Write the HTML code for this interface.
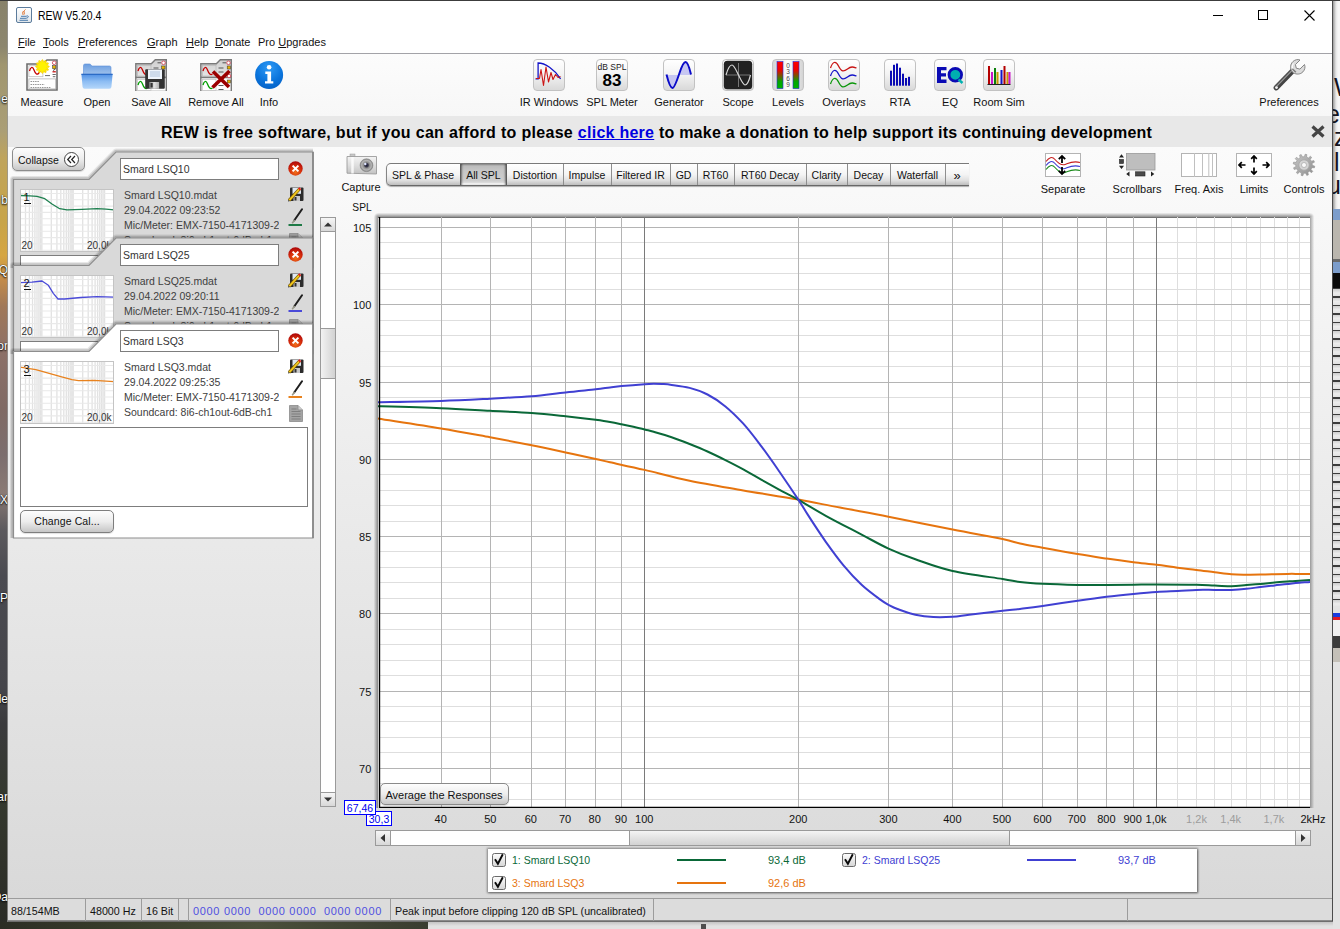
<!DOCTYPE html>
<html><head><meta charset="utf-8"><title>REW V5.20.4</title>
<style>
html,body{margin:0;padding:0}
body{width:1340px;height:929px;overflow:hidden;position:relative;background:#e9e9e9;font-family:"Liberation Sans",sans-serif;font-size:11px;color:#121212}
div,span,svg{position:absolute;box-sizing:border-box}
.t{white-space:pre;line-height:13px;height:13px}
.s{font-size:10.5px}
.lb{width:90px;text-align:center;top:96px}
.ico{width:32px;height:32px;top:59px;border:1px solid #c2c2c2;border-radius:4px;background:linear-gradient(#ffffff 0%,#f4f4f4 45%,#d9d9d9 100%);overflow:hidden}
.ico svg{left:-1px;top:-1px}

</style></head>
<body>
<!-- desktop -->
<div style="left:0;top:0;width:1340px;height:929px;background:#e9e9e9"></div>
<!-- desktop strip left -->
<div style="left:0;top:0;width:8px;height:929px;background:linear-gradient(#88826a 0%,#8c866e 5%,#a0966f 7%,#aa9e76 14%,#bfa45c 17%,#c8a448 24%,#d6a642 27.500%,#c48c4a 30%,#a07858 33%,#8c7068 38%,#806a64 44%,#7c6e6e 49%,#8a7a74 53%,#5c5a5e 57%,#4a4a50 62%,#45454a 74%,#3a3a3c 78%,#34382e 86%,#30322a 93%,#2a2c26 100%)"></div>
<div style="left:0;top:0;width:8px;height:929px;overflow:hidden;color:#fff;text-shadow:0 1px 2px #000,0 0 1px #000"><span class="t" style="right:0;top:92px;font-size:12px;line-height:14px;height:14px">e</span><span class="t" style="right:0;top:193px;font-size:12px;line-height:14px;height:14px">b</span><span class="t" style="right:0;top:263px;font-size:12px;line-height:14px;height:14px">Q</span><span class="t" style="right:0;top:339px;font-size:12px;line-height:14px;height:14px">or</span><span class="t" style="right:0;top:493px;font-size:12px;line-height:14px;height:14px">-X</span><span class="t" style="right:0;top:591px;font-size:12px;line-height:14px;height:14px">P</span><span class="t" style="right:0;top:692px;font-size:12px;line-height:14px;height:14px">ile</span><span class="t" style="right:0;top:790px;font-size:12px;line-height:14px;height:14px">ar</span><span class="t" style="right:0;top:890px;font-size:12px;line-height:14px;height:14px">Da</span></div>
<div style="left:7px;top:1px;width:1px;height:921px;background:rgba(150,150,150,.75)"></div>
<!-- desktop strip bottom -->
<div style="left:0;top:922px;width:428px;height:7px;background:linear-gradient(90deg,#2b2d24,#3a3f2c 30%,#4a4f3a 60%,#3a3d30)"></div>
<div style="left:428px;top:922px;width:912px;height:7px;background:linear-gradient(#c4c4c4,#e2e2e2 4px)"></div>
<div style="left:701px;top:924px;width:5px;height:5px;background:#4e4e4e"></div>
<!-- desktop strip right -->
<div style="left:1333px;top:0;width:7px;height:929px;background:#e3e3e3"></div>
<div style="left:1333px;top:1px;width:7px;height:208px;background:linear-gradient(90deg,#9a9a9a,#e6e6e6 3px,#f6f6f6 5px)"></div>
<div style="left:1333px;top:62px;width:7px;height:135px;overflow:hidden;font-size:25px;line-height:27px;color:#15151f"><span class="t" style="left:1px;top:12px;font-size:25px;line-height:27px;height:27px">W</span><span class="t" style="left:-7px;top:39px;font-size:25px;line-height:27px;height:27px">e</span><span class="t" style="left:1px;top:62px;font-size:25px;line-height:27px;height:27px">z</span><span class="t" style="left:1px;top:87px;font-size:25px;line-height:27px;height:27px">lo</span><span class="t" style="left:-6px;top:110px;font-size:25px;line-height:27px;height:27px">u</span></div>
<div style="left:1333px;top:209px;width:7px;height:11px;background:#7c9dcb"></div>
<div style="left:1333px;top:220px;width:7px;height:39px;background:#bab6ae"></div>
<div style="left:1333px;top:259px;width:7px;height:3px;background:#6a6a6a"></div>
<div style="left:1333px;top:262px;width:7px;height:11px;background:#7c9dcb"></div>
<div style="left:1333px;top:273px;width:7px;height:15px;background:#0a0a0a"></div>
<div style="left:1333px;top:288px;width:7px;height:318px;background:repeating-linear-gradient(#3c3c3c 0,#3c3c3c 1.400px,#cfcfcf 1.400px,#ececec 5px,#e2e2e2 8.400px)"></div>
<div style="left:1333px;top:613px;width:7px;height:4px;background:#1a3ce0"></div>
<div style="left:1333px;top:617px;width:7px;height:3px;background:#e01a28"></div>
<div style="left:1333px;top:620px;width:7px;height:16px;background:#f0f0f0"></div>
<div style="left:1333px;top:636px;width:7px;height:12px;background:#3c3c3c"></div>
<div style="left:1333px;top:648px;width:7px;height:14px;background:#c4c0b8"></div>
<!-- window -->
<div id="win" style="left:8px;top:1px;width:1324px;height:920px;background:#fff"></div>

<!-- titlebar -->
<svg style="left:16px;top:7px" width="16" height="16" viewBox="0 0 16 16"><defs><linearGradient id="jv" x1="0" y1="0" x2="0" y2="1"><stop offset="0" stop-color="#ffffff"/><stop offset="1" stop-color="#dfe5ea"/></linearGradient></defs><rect x=".5" y=".5" width="15" height="15" rx="1.500" fill="url(#jv)" stroke="#5c7c9c"/><path d="M4 11.300h6.500M3.500 13.300h8.500M5 9.300h5.500M10.500 9c2.500-.8 2.500 1.800 0 2" stroke="#3a6ea5" stroke-width=".9" fill="none"/><path d="M9.500 2.500c-3 2.200.2 3-1.800 5.300M7.600 4c-1.500 1.500-.5 2.500-1 3.500" stroke="#e0702a" stroke-width="1" fill="none"/></svg>
<span class="t" style="left:37.500px;top:7.500px;font-size:13px;line-height:16px;height:16px;color:#000;transform:scaleX(.805);transform-origin:0 0">REW V5.20.4</span>
<svg style="left:1205px;top:5px" width="120" height="22" viewBox="0 0 120 22"><path d="M8 10.5h10" stroke="#000" stroke-width="1"/><rect x="53.5" y="5.5" width="9" height="9" fill="none" stroke="#000"/><path d="M99.5 5.500l10 10M109.500 5.500l-10 10" stroke="#000" stroke-width="1.1"/></svg>
<span class="t" style="left:18px;top:36px"><u>F</u>ile</span>
<span class="t" style="left:43px;top:36px"><u>T</u>ools</span>
<span class="t" style="left:78px;top:36px"><u>P</u>references</span>
<span class="t" style="left:147px;top:36px"><u>G</u>raph</span>
<span class="t" style="left:186px;top:36px"><u>H</u>elp</span>
<span class="t" style="left:215px;top:36px"><u>D</u>onate</span>
<span class="t" style="left:258px;top:36px">Pro <u>U</u>pgrades</span>
<div style="left:8px;top:53px;width:1324px;height:1px;background:#a3a3a8"></div>

<!-- toolbar -->
<div style="left:8px;top:54px;width:1324px;height:62px;background:linear-gradient(#fcfcfc,#f7f7f7)"></div>
<!-- Measure -->
<svg style="left:26px;top:59px" width="32" height="32" viewBox="0 0 32 32">
<path d="M1 5h15l5-4h10v30H1z" fill="#fff" stroke="#6e6e6e" stroke-width="1.6"/>
<rect x="2.900" y="6.700" width="14" height="11" fill="#fff" stroke="#bdbdbd" stroke-width=".8"/>
<path d="M3.500 12c1-4 3-5 4.500-1s3 5 4.500 3.500 1.500-3 2.500-4" fill="none" stroke="#c40000" stroke-width="1.300"/>
<rect x="2.900" y="19.900" width="26.800" height="10" fill="#fff" stroke="#b4b4b4" stroke-width=".8"/>
<path d="M4.500 22.500h9M4.500 25.500h14M4.500 28.500h20" stroke="#8a8a8a" stroke-width=".9" stroke-dasharray="1.500 .8"/>
<circle cx="28.200" cy="3.800" r="1.800" fill="#fff" stroke="#d04a5a" stroke-width=".9"/>
<rect x="26.500" y="6.700" width="3.300" height="3" fill="#e7b400" stroke="#333" stroke-width=".5"/>
<path d="M26.500 12.800h3.300" stroke="#c40000" stroke-width="1.200"/><path d="M27 11.500l2.500-1.500" stroke="#222" stroke-width=".8"/>
<path d="M26.500 15.500h3.300M26.800 17.700h2.600M19 16.600h5" stroke="#444" stroke-width=".8"/>
<g transform="translate(16.400 7.600)"><g fill="#ffe800" stroke="#f3c800" stroke-width=".5"><ellipse rx="7" ry="1.700"/><ellipse rx="7" ry="1.700" transform="rotate(30)"/><ellipse rx="7" ry="1.700" transform="rotate(60)"/><ellipse rx="7" ry="1.700" transform="rotate(90)"/><ellipse rx="7" ry="1.700" transform="rotate(120)"/><ellipse rx="7" ry="1.700" transform="rotate(150)"/></g><circle r="4.500" fill="#fff200"/></g>
</svg>
<span class="t lb" style="left:-3px">Measure</span>
<!-- Open -->
<svg style="left:81px;top:59px" width="32" height="32" viewBox="0 0 32 32">
<defs><linearGradient id="fo1" x1="0" y1="0" x2="0" y2="1"><stop offset="0" stop-color="#6b9ee0"/><stop offset="1" stop-color="#a9c8ee"/></linearGradient><linearGradient id="fo2" x1="0" y1="0" x2="0" y2="1"><stop offset="0" stop-color="#4f8fe4"/><stop offset=".5" stop-color="#8dbdf3"/><stop offset="1" stop-color="#b4d6fa"/></linearGradient></defs>
<path d="M2.500 6.500q0-1.500 1.500-1.500h4.500q1 0 1.600 1l.7 1h17.700q1.500 0 1.500 1.500v9h-27.500z" fill="url(#fo1)" stroke="#5b8fd8" stroke-width=".6"/>
<path d="M.4 15h31.200l-1.200 13q-.2 1.800-2 1.800h-24.800q-1.800 0-2-1.800z" fill="url(#fo2)"/>
<path d="M.4 15.300h31.200" stroke="#2867c2" stroke-width="1.200"/>
</svg>
<span class="t lb" style="left:52px">Open</span>
<!-- Save All -->
<svg style="left:135px;top:59px" width="32" height="32" viewBox="0 0 32 32">
<defs><linearGradient id="gp" x1="0" y1="0" x2="0" y2="1"><stop offset="0" stop-color="#cfcfcf"/><stop offset="1" stop-color="#e6e6e6"/></linearGradient><linearGradient id="fm" x1="0" y1="0" x2="1" y2="0"><stop offset="0" stop-color="#8a8a8a"/><stop offset=".5" stop-color="#e2e2e2"/><stop offset="1" stop-color="#b0b0b0"/></linearGradient></defs>
<path d="M.8 4.800h15.500l4-4h11v17.700H.8z" fill="url(#gp)" stroke="#7a7a7a" stroke-width="1.400"/>
<path d="M.8 18.500h30.500v14H.8z" fill="#fff" stroke="#7a7a7a" stroke-width="1.400"/>
<rect x="2.500" y="6.500" width="13.500" height="10.500" fill="none" stroke="#b8b8b8" stroke-width=".7"/>
<rect x="2.500" y="20.500" width="13.500" height="11" fill="none" stroke="#c4c4c4" stroke-width=".7"/>
<path d="M3 12c1-4 3-5 4.500-1s3 5.500 5 4" fill="none" stroke="#c40000" stroke-width="1.300"/>
<path d="M3 26c1-4 3-5 4.500-1s3 5.500 5 4" fill="none" stroke="#00a000" stroke-width="1.300"/>
<circle cx="28.500" cy="3.800" r="1.800" fill="#fff" stroke="#d04a5a" stroke-width=".9"/><path d="M22.500 3.800h3.500M18.500 9h5" stroke="#333" stroke-width=".8"/>
<rect x="26.700" y="7" width="3.300" height="3" fill="#e7b400" stroke="#333" stroke-width=".5"/>
<rect x="10.200" y="10.300" width="19.600" height="19.500" rx="1" fill="#333"/>
<rect x="13" y="10.500" width="14" height="9.500" fill="#eef4fb"/>
<path d="M15 13h10M15 15h10M15 17h10" stroke="#9fb8d6" stroke-width=".8"/>
<rect x="14.300" y="23" width="9.800" height="6.800" fill="url(#fm)"/><rect x="15.500" y="24" width="2.200" height="4.500" fill="#333"/>
</svg>
<span class="t lb" style="left:106px">Save All</span>
<!-- Remove All -->
<svg style="left:200px;top:59px" width="32" height="32" viewBox="0 0 32 32">
<path d="M.8 4.800h15.500l4-4h11v17.700H.8z" fill="url(#gp)" stroke="#7a7a7a" stroke-width="1.400"/>
<path d="M.8 18.500h30.500v14H.8z" fill="#fff" stroke="#7a7a7a" stroke-width="1.400"/>
<rect x="2.500" y="6.500" width="13.500" height="10.500" fill="none" stroke="#b8b8b8" stroke-width=".7"/>
<rect x="2.500" y="20.500" width="13.500" height="11" fill="none" stroke="#c4c4c4" stroke-width=".7"/>
<path d="M3 12c1-4 3-5 4.500-1s3 5.500 5 4" fill="none" stroke="#c40000" stroke-width="1.300"/>
<path d="M3 26c1-4 3-5 4.500-1s3 5.500 5 4" fill="none" stroke="#00a000" stroke-width="1.300"/>
<circle cx="28.500" cy="3.800" r="1.800" fill="#fff" stroke="#d04a5a" stroke-width=".9"/><path d="M22.500 3.800h3.500M18.500 9h5M18.500 13h5M18.500 26.500h5M18.500 30.500h5" stroke="#333" stroke-width=".8"/>
<rect x="27.200" y="7" width="3.300" height="3" fill="#e7b400" stroke="#333" stroke-width=".5"/><rect x="27.200" y="21" width="3.300" height="3" fill="#e7b400" stroke="#333" stroke-width=".5"/>
<circle cx="29" cy="17" r="1.800" fill="#fff" stroke="#d04a5a" stroke-width=".9"/>
<path d="M13 12.500l16 15.500M29.500 12l-17 16.500" stroke="#9c0000" stroke-width="3.600"/>
</svg>
<span class="t lb" style="left:171px">Remove All</span>
<!-- Info -->
<svg style="left:253px;top:59px" width="32" height="32" viewBox="0 0 32 32">
<defs><radialGradient id="ig" cx=".5" cy=".25" r=".8"><stop offset="0" stop-color="#2f9af5"/><stop offset=".6" stop-color="#0a74dc"/><stop offset="1" stop-color="#0560c4"/></radialGradient></defs>
<circle cx="16.100" cy="16" r="14" fill="url(#ig)"/>
<circle cx="16.100" cy="8.200" r="2.300" fill="#fff"/>
<path d="M12.300 12.600h5.800v9.600h2.200v2.300h-8.300v-2.300h2.400v-7.300h-2.100z" fill="#fff"/>
</svg>
<span class="t lb" style="left:224px">Info</span>
<!-- IR Windows -->
<div class="ico" style="left:533px"><svg width="32" height="32" viewBox="0 0 32 32">
<path d="M2.500 19.800h2.600v-15.800c7 0 16 6 22.500 15.800" fill="none" stroke="#1414c8" stroke-width="1.300"/>
<path d="M3 19.500h3.500l1.500-9 2.500 16 2.500-18.500 2.500 15 2.500-9.500 2 7 2.500-5 2.500 3 2.500-1" fill="none" stroke="#cc1414" stroke-width="1.100" stroke-linejoin="round"/>
</svg></div>
<span class="t lb" style="left:504px">IR Windows</span>
<!-- SPL Meter -->
<div class="ico" style="left:596px"></div>
<span class="t" style="left:596px;top:62.5px;width:32px;text-align:center;font-size:8.5px;line-height:9px;height:9px;color:#222">dB SPL</span>
<span class="t" style="left:596px;top:71px;width:32px;text-align:center;font-size:17px;font-weight:bold;line-height:19px;height:19px;color:#000">83</span>
<span class="t lb" style="left:567px">SPL Meter</span>
<!-- Generator -->
<div class="ico" style="left:663px"><svg width="32" height="32" viewBox="0 0 32 32">
<path d="M3.500 16c2 8 4 13 6 13s4.500-7 6.500-13z" fill="#c6c6f2"/><path d="M16 16c2-7 4-13 6.500-13s4 6 5.500 13z" fill="#c6c6f2"/>
<path d="M3.500 15.500c2 8 4 13.500 6 13.500s5-9 7-15 4-11 6-11 4 6 5.500 12.500" fill="none" stroke="#0a0ac8" stroke-width="2"/>
</svg></div>
<span class="t lb" style="left:634px">Generator</span>
<!-- Scope -->
<div class="ico" style="left:722px"><svg width="32" height="32" viewBox="0 0 32 32">
<rect x="1.800" y="1.800" width="28.400" height="28.400" rx="3.500" fill="#222"/>
<path d="M16.500 4v24M4 16h24" stroke="#8c8c8c" stroke-width=".8"/>
<path d="M4 16c2-7 4-10 6-10s4.500 6 6.500 10 4.500 10 6.500 10 4-4 5.500-10" fill="none" stroke="#d8d8d8" stroke-width="1.200"/>
</svg></div>
<span class="t lb" style="left:693px">Scope</span>
<!-- Levels -->
<div class="ico" style="left:772px;background:linear-gradient(90deg,#d4d4d4,#fff 50%,#d4d4d4)"><svg width="32" height="32" viewBox="0 0 32 32">
<defs><linearGradient id="lv" x1="0" y1="0" x2="0" y2="1"><stop offset="0" stop-color="#ff0000"/><stop offset=".3" stop-color="#f00000"/><stop offset=".75" stop-color="#00a800"/><stop offset="1" stop-color="#00b000"/></linearGradient></defs>
<rect x="5" y="2.600" width="6" height="27" fill="url(#lv)" stroke="#2828e0" stroke-width=".6"/>
<rect x="21" y="2.600" width="6" height="27" fill="url(#lv)" stroke="#2828e0" stroke-width=".6"/>
<g font-family="Liberation Sans, sans-serif" font-size="6.500" fill="#444" text-anchor="middle"><text x="16" y="9">0</text><text x="16" y="15.300">3</text><text x="16" y="21.600">6</text><text x="16" y="27.900">9</text></g>
</svg></div>
<span class="t lb" style="left:743px">Levels</span>
<!-- Overlays -->
<div class="ico" style="left:828px"><svg width="32" height="32" viewBox="0 0 32 32" fill="none" stroke-width="1.300">
<path d="M2.500 9c2-6 5-8 8-2s5 6 9 3 6-2 9-1" stroke="#c81414"/>
<path d="M2.500 17c2-6 5-8 8-2s5 6 9 3 6-2 9-1" stroke="#1414c8"/>
<path d="M2.500 25c2-6 5-8 8-2s5 6 9 3 6-2 9-1" stroke="#0a960a"/>
</svg></div>
<span class="t lb" style="left:799px">Overlays</span>
<!-- RTA -->
<div class="ico" style="left:884px"><svg width="32" height="32" viewBox="0 0 32 32" fill="#0a0ab4">
<rect x="6" y="11.700" width="2" height="15"/><rect x="9" y="5.800" width="2" height="20.900"/><rect x="12" y="4.500" width="2" height="22.200"/><rect x="15" y="8.700" width="2" height="18"/><rect x="18" y="14.700" width="2" height="12"/><rect x="21" y="19" width="2" height="7.700"/><rect x="24" y="17.800" width="2" height="8.900"/>
</svg></div>
<span class="t lb" style="left:855px">RTA</span>
<!-- EQ -->
<div class="ico" style="left:934px"><svg width="32" height="32" viewBox="0 0 32 32">
<path d="M3 8h9.500v3.300h-5.500v2.900h5v3.200h-5v3.200h5.500v3.400H3z" fill="#0a0ab4"/>
<circle cx="21.300" cy="15.800" r="6.300" fill="#00b0b0" stroke="#0a0ab4" stroke-width="2.800"/>
<path d="M24.500 20.500l4 3.500" stroke="#00b0b0" stroke-width="2.400"/>
</svg></div>
<span class="t lb" style="left:905px">EQ</span>
<!-- Room Sim -->
<div class="ico" style="left:983px"><svg width="32" height="32" viewBox="0 0 32 32">
<rect x="5" y="7" width="2" height="18" fill="#b40000"/><rect x="8" y="13" width="2" height="12" fill="#c814c8"/><rect x="11" y="9" width="2" height="16" fill="#0a800a"/><rect x="13.500" y="13" width="2" height="12" fill="#c89600"/><rect x="17.500" y="11" width="2" height="14" fill="#1414c8"/><rect x="20.500" y="7" width="2" height="18" fill="#b40000"/><rect x="23.500" y="13" width="2" height="12" fill="#c89600"/><rect x="25.500" y="13" width="2" height="12" fill="#c814c8"/>
<path d="M4.500 25.500h23" stroke="#222" stroke-width="1"/>
</svg></div>
<span class="t lb" style="left:954px">Room Sim</span>
<!-- Preferences -->
<svg style="left:1273px;top:58px" width="33" height="34" viewBox="0 0 33 34">
<defs><linearGradient id="wr" x1="0" y1="0" x2="1" y2="1"><stop offset="0" stop-color="#9a9a9a"/><stop offset=".45" stop-color="#4a4a4a"/><stop offset="1" stop-color="#2a2a2a"/></linearGradient></defs>
<path d="M3.300 29.700l17.500-18" stroke="url(#wr)" stroke-width="5.400" stroke-linecap="round"/>
<path d="M3.800 28.200l16-16.500" stroke="#a8a8a8" stroke-width="1.200" stroke-linecap="round" opacity=".85"/>
<path d="M19 13.500c-2.200-3-1.800-7.200.8-9.800 2-2 5-2.700 7.200-1.700l-4.600 4.600.9 3.600 3.600.9 4.600-4.600c1 2.400.4 5.400-1.600 7.400-2.600 2.600-6.400 2.800-9.400 1z" fill="#dcdcdc" stroke="#7a7a7a" stroke-width=".9"/>
<path d="M20.500 5.500c-1.500 2-1.500 4.500-.3 6.300" stroke="#fff" stroke-width="1.200" fill="none" opacity=".9"/>
<path d="M19.300 10.800l3.500 3.500" stroke="#555" stroke-width="1.600" opacity=".7"/>
<circle cx="3.500" cy="29.600" r="1.400" fill="#f4f4f4"/>
</svg>
<span class="t lb" style="left:1244px">Preferences</span>

<!-- banner -->
<div style="left:8px;top:116px;width:1324px;height:31px;background:#e8e8e8"></div>
<span class="t" style="left:161px;top:123px;font-size:16px;font-weight:bold;line-height:20px;height:20px;color:#000;letter-spacing:.31px">REW is free software, but if you can afford to please <span style="position:static;color:#0000e0;text-decoration:underline;letter-spacing:.26px">click here</span><span style="position:static;letter-spacing:.23px"> to make a donation to help support its continuing development</span></span>
<svg style="left:1311px;top:125px" width="14" height="13" viewBox="0 0 14 13"><path d="M1.500 1.500l11 10M12.500 1.500l-11 10" stroke="#444" stroke-width="3.200"/></svg>

<!-- leftpanel -->
<div id="main" style="left:8px;top:147px;width:1324px;height:751px;background:linear-gradient(#fbfbfb,#d9d9d9)"></div>
<!-- collapse button -->
<div style="left:12px;top:147px;width:73px;height:24px;border:1px solid #8c8c8c;border-radius:5px;background:linear-gradient(#fdfdfd,#ededed 50%,#c8c8c8);box-shadow:0 1px 1px rgba(0,0,0,.15)"></div>
<span class="t s" style="left:18px;top:154px;color:#111">Collapse</span>
<svg style="left:63px;top:151px" width="17" height="17" viewBox="0 0 17 17"><circle cx="8.500" cy="8.500" r="7" fill="#fff" stroke="#444" stroke-width="1"/><path d="M8 5l-3.300 3.500 3.300 3.500M12 5l-3.300 3.500 3.300 3.500" fill="none" stroke="#222" stroke-width="1.200"/></svg>
<!-- left scrollbar -->
<div style="left:320px;top:217px;width:16px;height:590px;background:#fff;border:1px solid #9a9a9a"></div>
<div style="left:320px;top:217px;width:16px;height:15px;border:1px solid #9a9a9a;background:linear-gradient(#f6f6f6,#d8d8d8)"></div>
<div style="left:320px;top:792px;width:16px;height:15px;border:1px solid #9a9a9a;background:linear-gradient(#f6f6f6,#d8d8d8)"></div>
<svg style="left:320px;top:217px" width="16" height="15" viewBox="0 0 16 15"><path d="M4 9.500h8l-4-4z" fill="#333"/></svg>
<svg style="left:320px;top:792px" width="16" height="15" viewBox="0 0 16 15"><path d="M4 5.500h8l-4 4z" fill="#333"/></svg>
<div style="left:320px;top:328px;width:16px;height:51px;border:1px solid #9a9a9a;background:linear-gradient(90deg,#f2f2f2,#d2d2d2)"></div>

<!-- leftpanel (generated) -->
<div style="left:8px;top:147px;width:310px;height:660px;overflow:hidden">
<div style="left:0;top:-1.5px;width:310px;height:126px">
<svg style="left:0;top:0" width="310" height="126" viewBox="0 0 310 126"><path d="M5.5 122.0V33.5H81.0L108.0 6H305" fill="none" stroke="rgba(0,0,0,.09)" stroke-width="7" stroke-linejoin="round"/><path d="M5.5 122.0V33.5H81.0L108.0 6H305" fill="none" stroke="rgba(0,0,0,.15)" stroke-width="4.500" stroke-linejoin="round"/><path d="M5.5 33.5H81.0L108.0 6H305V122.0H5.5Z" fill="#d9d9d9" stroke="#8e8e8e" stroke-width="1.200"/><path d="M305 6V122.0" stroke="#858585" stroke-width="1.600"/></svg>
<div style="left:112px;top:12px;width:159px;height:22px;background:#fff;border:1px solid #7d7d7d"></div>
<span class="t s" style="left:115px;top:17.5px;color:#333">Smard LSQ10</span>
<svg style="left:279.5px;top:15.5px" width="15" height="15" viewBox="0 0 15 15"><defs><radialGradient id="rx1" cx=".5" cy=".75" r=".7"><stop offset="0" stop-color="#f0701a"/><stop offset=".6" stop-color="#d42a0a"/><stop offset="1" stop-color="#b00a0a"/></radialGradient></defs><circle cx="7.500" cy="7.500" r="7.200" fill="url(#rx1)"/><path d="M4.600 4.600l5.800 5.800M10.400 4.600l-5.800 5.800" stroke="#fff" stroke-width="2"/></svg>
<svg style="left:12px;top:43.5px" width="94" height="63" viewBox="0 0 94 63"><rect x="0" y="0" width="94" height="63" fill="#fff"/><path d="M0.0 0V63M5.5 0V63M9.4 0V63M12.5 0V63M14.9 0V63M17.0 0V63M18.9 0V63M20.5 0V63M21.9 0V63M31.3 0V63M36.9 0V63M40.8 0V63M43.8 0V63M46.3 0V63M48.4 0V63M50.2 0V63M51.8 0V63M53.2 0V63M62.7 0V63M68.2 0V63M72.1 0V63M75.1 0V63M77.6 0V63M79.7 0V63M81.5 0V63M83.1 0V63M84.6 0V63M94.0 0V63" stroke="#e2e2e2" stroke-width="1.300"/><path d="M0 4.5H94M0 10.8H94M0 17.1H94M0 23.4H94M0 29.7H94M0 36.0H94M0 42.3H94M0 48.6H94M0 54.9H94M0 61.2H94" stroke="#e9e9e9" stroke-width="1.100"/><path d="M0.0 6.5 L10.0 6.8 L17.0 7.4 L24.8 9.7 L32.0 15.0 L39.7 19.7 L47.0 20.9 L62.0 20.4 L77.0 19.7 L86.0 20.2 L94.0 20.9" fill="none" stroke="#1f8050" stroke-width="1.300" stroke-linejoin="round"/><rect x=".5" y=".5" width="93" height="62" fill="none" stroke="#c4c4c4"/></svg>
<span class="t" style="left:15.5px;top:45.5px;font-size:11px;color:#111">1</span>
<div style="left:15.5px;top:57.5px;width:7px;height:1px;background:#111"></div>
<span class="t" style="left:13.5px;top:93px;font-size:10px;color:#333">20</span>
<span class="t" style="left:79px;top:93px;font-size:10px;color:#333">20,0k</span>
<div style="left:116px;top:42px;width:155px;height:64px;overflow:hidden">
<span class="t s" style="left:0;top:1.5px;color:#404040">Smard LSQ10.mdat</span>
<span class="t s" style="left:0;top:16.5px;color:#404040">29.04.2022 09:23:52</span>
<span class="t s" style="left:0;top:31.5px;color:#404040">Mic/Meter: EMX-7150-4171309-2</span>
<span class="t s" style="left:0;top:46.5px;color:#404040">Soundcard: 8i6-ch1out-6dB-ch1</span>
</div>
<svg style="left:279.5px;top:41px" width="16" height="15" viewBox="0 0 16 15"><rect x="2" y=".5" width="13.500" height="13.500" rx="1" fill="#2c2c2c"/><rect x="4.500" y=".8" width="8.500" height="6" fill="#dfe8f2"/><rect x="5.500" y="9" width="6.500" height="5" fill="#c8c8c8"/><rect x="6.500" y="10" width="2" height="3.500" fill="#333"/><path d="M1 13.500l10.500-11.500" stroke="#7a5a00" stroke-width="3.200"/><path d="M1.200 13.300l10.200-11.200" stroke="#f2c81e" stroke-width="1.800"/><path d="M11 2.600l1.300-1.500" stroke="#e0201a" stroke-width="2.600"/><path d="M0 14.500l1.800-.6-1.200-1.200z" fill="#222"/></svg>
<svg style="left:279.5px;top:62.5px" width="16" height="19" viewBox="0 0 16 19"><path d="M14 1.300l-7.800 11.200" stroke="#1e1e1e" stroke-width="2" stroke-linecap="round"/><path d="M6.600 12l-2.400 3.300" stroke="#9a9a8a" stroke-width="1.600"/><path d="M.5 17h13.500" stroke="#1f7a46" stroke-width="2"/></svg>
<svg style="left:280.5px;top:87.5px" width="14" height="17" viewBox="0 0 14 17"><path d="M.5.500h8.500l4.500 4.500v11.500H.5z" fill="#a4a4a4" stroke="#8a8a8a" stroke-width=".8"/><path d="M9 .5v4.500h4.500" fill="#d0d0d0" stroke="#8a8a8a" stroke-width=".8"/><path d="M2.500 4h5M2.500 6.500h9M2.500 9h9M2.500 11.500h9M2.500 14h9" stroke="#7a7a7a" stroke-width=".9"/></svg>
<div style="left:12px;top:109.5px;width:288px;height:80px;background:#fff;border:1px solid #7d7d7d"></div>
</div>
<div style="left:0;top:84.5px;width:310px;height:126px">
<svg style="left:0;top:0" width="310" height="126" viewBox="0 0 310 126"><path d="M5.5 122.0V33.5H81.0L108.0 6H305" fill="none" stroke="rgba(0,0,0,.09)" stroke-width="7" stroke-linejoin="round"/><path d="M5.5 122.0V33.5H81.0L108.0 6H305" fill="none" stroke="rgba(0,0,0,.15)" stroke-width="4.500" stroke-linejoin="round"/><path d="M5.5 33.5H81.0L108.0 6H305V122.0H5.5Z" fill="#d9d9d9" stroke="#8e8e8e" stroke-width="1.200"/><path d="M305 6V122.0" stroke="#858585" stroke-width="1.600"/></svg>
<div style="left:112px;top:12px;width:159px;height:22px;background:#fff;border:1px solid #7d7d7d"></div>
<span class="t s" style="left:115px;top:17.5px;color:#333">Smard LSQ25</span>
<svg style="left:279.5px;top:15.5px" width="15" height="15" viewBox="0 0 15 15"><defs><radialGradient id="rx2" cx=".5" cy=".75" r=".7"><stop offset="0" stop-color="#f0701a"/><stop offset=".6" stop-color="#d42a0a"/><stop offset="1" stop-color="#b00a0a"/></radialGradient></defs><circle cx="7.500" cy="7.500" r="7.200" fill="url(#rx2)"/><path d="M4.600 4.600l5.800 5.800M10.400 4.600l-5.800 5.800" stroke="#fff" stroke-width="2"/></svg>
<svg style="left:12px;top:43.5px" width="94" height="63" viewBox="0 0 94 63"><rect x="0" y="0" width="94" height="63" fill="#fff"/><path d="M0.0 0V63M5.5 0V63M9.4 0V63M12.5 0V63M14.9 0V63M17.0 0V63M18.9 0V63M20.5 0V63M21.9 0V63M31.3 0V63M36.9 0V63M40.8 0V63M43.8 0V63M46.3 0V63M48.4 0V63M50.2 0V63M51.8 0V63M53.2 0V63M62.7 0V63M68.2 0V63M72.1 0V63M75.1 0V63M77.6 0V63M79.7 0V63M81.5 0V63M83.1 0V63M84.6 0V63M94.0 0V63" stroke="#e2e2e2" stroke-width="1.300"/><path d="M0 4.5H94M0 10.8H94M0 17.1H94M0 23.4H94M0 29.7H94M0 36.0H94M0 42.3H94M0 48.6H94M0 54.9H94M0 61.2H94" stroke="#e9e9e9" stroke-width="1.100"/><path d="M0.0 7.7 L12.0 7.2 L22.0 6.0 L28.4 10.3 L33.3 18.3 L38.0 24.0 L44.6 24.0 L60.7 22.5 L76.9 21.6 L94.0 22.2" fill="none" stroke="#4a4ad8" stroke-width="1.300" stroke-linejoin="round"/><rect x=".5" y=".5" width="93" height="62" fill="none" stroke="#c4c4c4"/></svg>
<span class="t" style="left:15.5px;top:45.5px;font-size:11px;color:#111">2</span>
<div style="left:15.5px;top:57.5px;width:7px;height:1px;background:#111"></div>
<span class="t" style="left:13.5px;top:93px;font-size:10px;color:#333">20</span>
<span class="t" style="left:79px;top:93px;font-size:10px;color:#333">20,0k</span>
<div style="left:116px;top:42px;width:155px;height:64px;overflow:hidden">
<span class="t s" style="left:0;top:1.5px;color:#404040">Smard LSQ25.mdat</span>
<span class="t s" style="left:0;top:16.5px;color:#404040">29.04.2022 09:20:11</span>
<span class="t s" style="left:0;top:31.5px;color:#404040">Mic/Meter: EMX-7150-4171309-2</span>
<span class="t s" style="left:0;top:46.5px;color:#404040">Soundcard: 8i6-ch1out-6dB-ch1</span>
</div>
<svg style="left:279.5px;top:41px" width="16" height="15" viewBox="0 0 16 15"><rect x="2" y=".5" width="13.500" height="13.500" rx="1" fill="#2c2c2c"/><rect x="4.500" y=".8" width="8.500" height="6" fill="#dfe8f2"/><rect x="5.500" y="9" width="6.500" height="5" fill="#c8c8c8"/><rect x="6.500" y="10" width="2" height="3.500" fill="#333"/><path d="M1 13.500l10.500-11.500" stroke="#7a5a00" stroke-width="3.200"/><path d="M1.200 13.300l10.200-11.200" stroke="#f2c81e" stroke-width="1.800"/><path d="M11 2.600l1.300-1.500" stroke="#e0201a" stroke-width="2.600"/><path d="M0 14.500l1.800-.6-1.200-1.200z" fill="#222"/></svg>
<svg style="left:279.5px;top:62.5px" width="16" height="19" viewBox="0 0 16 19"><path d="M14 1.300l-7.800 11.200" stroke="#1e1e1e" stroke-width="2" stroke-linecap="round"/><path d="M6.600 12l-2.400 3.300" stroke="#9a9a8a" stroke-width="1.600"/><path d="M.5 17h13.500" stroke="#4a4ad8" stroke-width="2"/></svg>
<svg style="left:280.5px;top:87.5px" width="14" height="17" viewBox="0 0 14 17"><path d="M.5.500h8.500l4.500 4.500v11.500H.5z" fill="#a4a4a4" stroke="#8a8a8a" stroke-width=".8"/><path d="M9 .5v4.500h4.500" fill="#d0d0d0" stroke="#8a8a8a" stroke-width=".8"/><path d="M2.500 4h5M2.500 6.500h9M2.500 9h9M2.500 11.500h9M2.500 14h9" stroke="#7a7a7a" stroke-width=".9"/></svg>
<div style="left:12px;top:109.5px;width:288px;height:80px;background:#fff;border:1px solid #7d7d7d"></div>
</div>
<div style="left:0;top:170.5px;width:310px;height:224px">
<svg style="left:0;top:0" width="310" height="224" viewBox="0 0 310 224"><path d="M5.5 220.0V33.5H81.0L108.0 6H305" fill="none" stroke="rgba(0,0,0,.09)" stroke-width="7" stroke-linejoin="round"/><path d="M5.5 220.0V33.5H81.0L108.0 6H305" fill="none" stroke="rgba(0,0,0,.15)" stroke-width="4.500" stroke-linejoin="round"/><path d="M5.5 33.5H81.0L108.0 6H305V220.0H5.5Z" fill="#ffffff" stroke="#8e8e8e" stroke-width="1.200"/><path d="M305 6V220.0" stroke="#858585" stroke-width="1.600"/></svg>
<div style="left:112px;top:12px;width:159px;height:22px;background:#fff;border:1px solid #7d7d7d"></div>
<span class="t s" style="left:115px;top:17.5px;color:#333">Smard LSQ3</span>
<svg style="left:279.5px;top:15.5px" width="15" height="15" viewBox="0 0 15 15"><defs><radialGradient id="rx3" cx=".5" cy=".75" r=".7"><stop offset="0" stop-color="#f0701a"/><stop offset=".6" stop-color="#d42a0a"/><stop offset="1" stop-color="#b00a0a"/></radialGradient></defs><circle cx="7.500" cy="7.500" r="7.200" fill="url(#rx3)"/><path d="M4.600 4.600l5.800 5.800M10.400 4.600l-5.800 5.800" stroke="#fff" stroke-width="2"/></svg>
<svg style="left:12px;top:43.5px" width="94" height="63" viewBox="0 0 94 63"><rect x="0" y="0" width="94" height="63" fill="#fff"/><path d="M0.0 0V63M5.5 0V63M9.4 0V63M12.5 0V63M14.9 0V63M17.0 0V63M18.9 0V63M20.5 0V63M21.9 0V63M31.3 0V63M36.9 0V63M40.8 0V63M43.8 0V63M46.3 0V63M48.4 0V63M50.2 0V63M51.8 0V63M53.2 0V63M62.7 0V63M68.2 0V63M72.1 0V63M75.1 0V63M77.6 0V63M79.7 0V63M81.5 0V63M83.1 0V63M84.6 0V63M94.0 0V63" stroke="#e2e2e2" stroke-width="1.300"/><path d="M0 4.5H94M0 10.8H94M0 17.1H94M0 23.4H94M0 29.7H94M0 36.0H94M0 42.3H94M0 48.6H94M0 54.9H94M0 61.2H94" stroke="#e9e9e9" stroke-width="1.100"/><path d="M0.0 6.1 L15.8 8.7 L41.7 15.8 L52.0 18.7 L58.5 19.7 L74.0 19.3 L94.0 20.6" fill="none" stroke="#e8821e" stroke-width="1.300" stroke-linejoin="round"/><rect x=".5" y=".5" width="93" height="62" fill="none" stroke="#c4c4c4"/></svg>
<span class="t" style="left:15.5px;top:45.5px;font-size:11px;color:#111">3</span>
<div style="left:15.5px;top:57.5px;width:7px;height:1px;background:#111"></div>
<span class="t" style="left:13.5px;top:93px;font-size:10px;color:#333">20</span>
<span class="t" style="left:79px;top:93px;font-size:10px;color:#333">20,0k</span>
<div style="left:116px;top:42px;width:155px;height:64px;overflow:hidden">
<span class="t s" style="left:0;top:1.5px;color:#404040">Smard LSQ3.mdat</span>
<span class="t s" style="left:0;top:16.5px;color:#404040">29.04.2022 09:25:35</span>
<span class="t s" style="left:0;top:31.5px;color:#404040">Mic/Meter: EMX-7150-4171309-2</span>
<span class="t s" style="left:0;top:46.5px;color:#404040">Soundcard: 8i6-ch1out-6dB-ch1</span>
</div>
<svg style="left:279.5px;top:41px" width="16" height="15" viewBox="0 0 16 15"><rect x="2" y=".5" width="13.500" height="13.500" rx="1" fill="#2c2c2c"/><rect x="4.500" y=".8" width="8.500" height="6" fill="#dfe8f2"/><rect x="5.500" y="9" width="6.500" height="5" fill="#c8c8c8"/><rect x="6.500" y="10" width="2" height="3.500" fill="#333"/><path d="M1 13.500l10.500-11.500" stroke="#7a5a00" stroke-width="3.200"/><path d="M1.200 13.300l10.200-11.200" stroke="#f2c81e" stroke-width="1.800"/><path d="M11 2.600l1.300-1.500" stroke="#e0201a" stroke-width="2.600"/><path d="M0 14.500l1.800-.6-1.200-1.200z" fill="#222"/></svg>
<svg style="left:279.5px;top:62.5px" width="16" height="19" viewBox="0 0 16 19"><path d="M14 1.300l-7.800 11.200" stroke="#1e1e1e" stroke-width="2" stroke-linecap="round"/><path d="M6.600 12l-2.400 3.300" stroke="#9a9a8a" stroke-width="1.600"/><path d="M.5 17h13.500" stroke="#e8821e" stroke-width="2"/></svg>
<svg style="left:280.5px;top:87.5px" width="14" height="17" viewBox="0 0 14 17"><path d="M.5.500h8.500l4.500 4.500v11.500H.5z" fill="#a4a4a4" stroke="#8a8a8a" stroke-width=".8"/><path d="M9 .5v4.500h4.500" fill="#d0d0d0" stroke="#8a8a8a" stroke-width=".8"/><path d="M2.500 4h5M2.500 6.500h9M2.500 9h9M2.500 11.500h9M2.500 14h9" stroke="#7a7a7a" stroke-width=".9"/></svg>
<div style="left:12px;top:109.5px;width:288px;height:80px;background:#fff;border:1px solid #7d7d7d"></div>
<div style="left:12px;top:192.5px;width:94px;height:23px;border:1px solid #7e7e7e;border-radius:5px;background:linear-gradient(#fdfdfd,#ededed 50%,#c6c6c6);box-shadow:0 1px 1px rgba(0,0,0,.12)"></div>
<span class="t s" style="left:12px;top:197.5px;width:94px;text-align:center;color:#111;letter-spacing:.1px">Change Cal...</span>
</div>
</div>
<!-- graphtop (generated) -->
<svg style="left:345.7px;top:153px" width="32" height="23" viewBox="0 0 32 23">
<defs><linearGradient id="cam" x1="0" y1="0" x2="0" y2="1"><stop offset="0" stop-color="#f4f4f4"/><stop offset=".55" stop-color="#dcdcdc"/><stop offset="1" stop-color="#c2c2c2"/></linearGradient>
<radialGradient id="lens" cx=".5" cy=".5" r=".5"><stop offset="0" stop-color="#1a1a3a"/><stop offset=".28" stop-color="#3a3a4a"/><stop offset=".45" stop-color="#8a8a8a"/><stop offset=".75" stop-color="#b4b4b4"/><stop offset="1" stop-color="#8c8c8c"/></radialGradient></defs>
<rect x="4" y="1" width="5" height="2.500" fill="#c8c8c8" stroke="#9a9a9a" stroke-width=".5"/>
<path d="M1 3.500h29.500v17.500l-29.500-.8z" fill="url(#cam)" stroke="#9c9c9c" stroke-width=".9"/>
<path d="M6.500 4v16.500" stroke="#fff" stroke-width="2.500" opacity=".8"/>
<circle cx="20.500" cy="12.200" r="6.400" fill="url(#lens)" stroke="#7a7a7a" stroke-width=".6"/>
<circle cx="19.300" cy="11" r="1.200" fill="#dfe6ff"/>
</svg>
<span class="t" style="left:331px;top:181px;width:60px;text-align:center">Capture</span>
<div style="left:386px;top:163px;width:583px;height:23px;border:1px solid #858585;border-top-color:#7a7a7a;border-bottom-color:#686868;border-right:none;border-radius:5px 0 0 5px;background:linear-gradient(#ffffff,#f4f4f4 50%,#e0e0e0 78%,#bebebe);box-shadow:0 1px 1px rgba(0,0,0,.3);overflow:hidden">
<div style="left:73px;top:0;width:47px;height:21px;background:linear-gradient(#8e8e8e 0,#bcbcbc 10%,#c6c6c6 30%,#cecece 80%,#dedede 90%,#f4f4f4 94%,#f4f4f4 100%);box-shadow:inset 2px 0 2px -1px rgba(0,0,0,.45),inset -2px 0 2px -1px rgba(0,0,0,.45);border-left:1px solid #5c5c5c;border-right:1px solid #5c5c5c"></div>
<div style="left:176px;top:-1px;width:1px;height:23px;background:#8e8e8e"></div>
<div style="left:224px;top:-1px;width:1px;height:23px;background:#8e8e8e"></div>
<div style="left:283px;top:-1px;width:1px;height:23px;background:#8e8e8e"></div>
<div style="left:310px;top:-1px;width:1px;height:23px;background:#8e8e8e"></div>
<div style="left:347px;top:-1px;width:1px;height:23px;background:#8e8e8e"></div>
<div style="left:419px;top:-1px;width:1px;height:23px;background:#8e8e8e"></div>
<div style="left:460px;top:-1px;width:1px;height:23px;background:#8e8e8e"></div>
<div style="left:503px;top:-1px;width:1px;height:23px;background:#8e8e8e"></div>
<div style="left:558px;top:-1px;width:1px;height:23px;background:#8e8e8e"></div>
</div>
<span class="t s" style="left:386px;top:168.500px;width:74px;text-align:center;color:#111;">SPL &amp; Phase</span>
<span class="t s" style="left:460px;top:168.500px;width:47px;text-align:center;color:#111;">All SPL</span>
<span class="t s" style="left:507px;top:168.500px;width:56px;text-align:center;color:#111;">Distortion</span>
<span class="t s" style="left:563px;top:168.500px;width:48px;text-align:center;color:#111;">Impulse</span>
<span class="t s" style="left:611px;top:168.500px;width:59px;text-align:center;color:#111;">Filtered IR</span>
<span class="t s" style="left:670px;top:168.500px;width:27px;text-align:center;color:#111;">GD</span>
<span class="t s" style="left:697px;top:168.500px;width:37px;text-align:center;color:#111;">RT60</span>
<span class="t s" style="left:734px;top:168.500px;width:72px;text-align:center;color:#111;">RT60 Decay</span>
<span class="t s" style="left:806px;top:168.500px;width:41px;text-align:center;color:#111;">Clarity</span>
<span class="t s" style="left:847px;top:168.500px;width:43px;text-align:center;color:#111;">Decay</span>
<span class="t s" style="left:890px;top:168.500px;width:55px;text-align:center;color:#111;">Waterfall</span>
<span class="t s" style="left:945px;top:168.500px;width:24px;text-align:center;color:#111;font-size:13px;">»</span>
<svg style="left:1045px;top:153px" width="36" height="24" viewBox="0 0 36 24">
<rect x=".5" y=".5" width="35" height="23" fill="#fff" stroke="#b4b4b4"/>
<g fill="none" stroke-width="1.100"><path d="M1 8.500c3-4 6-5.500 9-2s6 6.500 10 5 8-4 15-2" stroke="#c81e1e"/><path d="M1 12.500c3-4 6-5.500 9-2s6 6.500 10 5 8-4 15-2" stroke="#3c3cd2"/><path d="M1 16.500c3-4 6-5.500 9-2s6 6.500 10 5 8-4 15-2" stroke="#1e8c1e"/></g>
<path d="M17 10V3.500M13.800 6.200L17 3l3.200 3.200M17 14v6.500M13.800 17.800L17 21l3.200-3.200" fill="none" stroke="#000" stroke-width="1.800"/>
</svg>
<span class="t" style="left:1023px;top:183px;width:80px;text-align:center">Separate</span>
<svg style="left:1117px;top:152px" width="40" height="26" viewBox="0 0 40 26">
<rect x="9.500" y="1.500" width="28.500" height="16.500" fill="#bebebe" stroke="#9a9a9a" stroke-width=".8"/>
<path d="M2 5.500h5l-2.500-3.300zM2 13.700h5l-2.500 3.300z" fill="#222"/><rect x="2.500" y="7.500" width="4" height="4" fill="#444" stroke="#222" stroke-width=".6"/>
<path d="M12.500 19.500v5l-3.300-2.500zM34 19.500v5l3.300-2.500z" fill="#222"/><rect x="18.500" y="19.800" width="9.500" height="4.200" fill="#4a4a4a" stroke="#222" stroke-width=".6"/>
</svg>
<span class="t" style="left:1097px;top:183px;width:80px;text-align:center">Scrollbars</span>
<svg style="left:1181px;top:153px" width="36" height="24" viewBox="0 0 36 24">
<rect x=".5" y=".5" width="35" height="23" fill="#fff" stroke="#b4b4b4"/><path d="M13.500 0v24M21.500 0v24M27.800 0v24M31.500 0v24" stroke="#c0c0c0" stroke-width="1"/></svg>
<span class="t" style="left:1159px;top:183px;width:80px;text-align:center">Freq. Axis</span>
<svg style="left:1236px;top:153px" width="36" height="24" viewBox="0 0 36 24">
<rect x=".5" y=".5" width="35" height="23" fill="#fff" stroke="#b4b4b4"/>
<path d="M18 9.500V3M15.200 5.800L18 3l2.800 2.800M18 14.500V21M15.200 18.200L18 21l2.800-2.800M9.500 12H3M5.800 9.200L3 12l2.800 2.800M26.500 12H33M30.200 9.200L33 12l-2.800 2.800" fill="none" stroke="#000" stroke-width="1.700"/></svg>
<span class="t" style="left:1214px;top:183px;width:80px;text-align:center">Limits</span>
<svg style="left:1292px;top:153px" width="24" height="24" viewBox="0 0 24 24">
<defs><linearGradient id="gg" x1="0" y1="0" x2="1" y2="1"><stop offset="0" stop-color="#c8c8c8"/><stop offset="1" stop-color="#8e8e8e"/></linearGradient></defs>
<path d="M20.29 12.35L22.74 13.13L22.43 14.80L19.87 14.65L19.01 16.45L20.74 18.35L19.64 19.64L17.49 18.23L15.85 19.36L16.39 21.87L14.80 22.43L13.64 20.14L11.65 20.29L10.87 22.74L9.20 22.43L9.35 19.87L7.55 19.01L5.65 20.74L4.36 19.64L5.77 17.49L4.64 15.85L2.13 16.39L1.57 14.80L3.86 13.64L3.71 11.65L1.26 10.87L1.57 9.20L4.13 9.35L4.99 7.55L3.26 5.65L4.36 4.36L6.51 5.77L8.15 4.64L7.61 2.13L9.20 1.57L10.36 3.86L12.35 3.71L13.13 1.26L14.80 1.57L14.65 4.13L16.45 4.99L18.35 3.26L19.64 4.36L18.23 6.51L19.36 8.15L21.87 7.61L22.43 9.20L20.14 10.36Z" fill="url(#gg)" stroke="#909090" stroke-width=".6" stroke-linejoin="round"/>
<circle cx="12" cy="12" r="5.200" fill="#d4d4d4" stroke="#a8a8a8" stroke-width=".8"/><circle cx="12" cy="12" r="2.500" fill="#fafafa" stroke="#9a9a9a" stroke-width=".6"/></svg>
<span class="t" style="left:1264px;top:183px;width:80px;text-align:center">Controls</span>
<span class="t" style="left:342px;top:201px;width:40px;text-align:center;font-size:10.2px">SPL</span>
<!-- graph (generated) -->
<div style="left:374px;top:217px;width:4px;height:591px;background:linear-gradient(90deg,rgba(0,0,0,.03),rgba(0,0,0,.42))"></div>
<div style="left:1310px;top:217px;width:4px;height:591px;background:linear-gradient(90deg,rgba(0,0,0,.34),rgba(0,0,0,.02))"></div>
<div style="left:378px;top:213px;width:932px;height:4px;background:linear-gradient(rgba(0,0,0,.03),rgba(0,0,0,.42))"></div>
<div style="left:374px;top:213px;width:4px;height:4px;background:radial-gradient(circle at 100% 100%,rgba(0,0,0,.42),rgba(0,0,0,.02) 4px,rgba(0,0,0,0) 4.5px)"></div>
<div style="left:1310px;top:213px;width:4px;height:4px;background:radial-gradient(circle at 0 100%,rgba(0,0,0,.36),rgba(0,0,0,.02) 4px,rgba(0,0,0,0) 4.5px)"></div>
<div style="left:378px;top:217px;width:932px;height:591px;background:#fff;border-top:1px solid #727272"></div>
<svg style="left:378px;top:217px" width="932" height="591" viewBox="378 217 932 591"><path d="M379 799.5H1310M379 783.5H1310M379 752.5H1310M379 737.5H1310M379 721.5H1310M379 706.5H1310M379 675.5H1310M379 660.5H1310M379 644.5H1310M379 629.5H1310M379 598.5H1310M379 582.5H1310M379 567.5H1310M379 551.5H1310M379 521.5H1310M379 505.5H1310M379 490.5H1310M379 474.5H1310M379 443.5H1310M379 428.5H1310M379 412.5H1310M379 397.5H1310M379 366.5H1310M379 351.5H1310M379 335.5H1310M379 320.5H1310M379 289.5H1310M379 273.5H1310M379 258.5H1310M379 242.5H1310" stroke="#dedede" stroke-width="1"/><path d="M1177.5 217V807M1196.5 217V807M1214.5 217V807M1231.5 217V807M1246.5 217V807M1260.5 217V807M1274.5 217V807M1287.5 217V807M1299.5 217V807" stroke="#dedede" stroke-width="1"/><path d="M379 768.5H1310M379 691.5H1310M379 613.5H1310M379 536.5H1310M379 459.5H1310M379 382.5H1310M379 304.5H1310M379 227.5H1310" stroke="#b4b4b4" stroke-width="1"/><path d="M441.5 217V807M490.5 217V807M531.5 217V807M565.5 217V807M595.5 217V807M621.5 217V807M798.5 217V807M888.5 217V807M952.5 217V807M1002.5 217V807M1042.5 217V807M1077.5 217V807M1106.5 217V807M1133.5 217V807" stroke="#b4b4b4" stroke-width="1"/><path d="M644.5 217V807M1156.5 217V807" stroke="#7a7a7a" stroke-width="1"/><path d="M377.0 418.4C377.3 418.4 368.3 417.0 379.0 418.7C389.7 420.4 422.5 425.3 441.0 428.4C459.5 431.5 474.9 434.5 490.0 437.3C505.1 440.1 519.0 442.7 531.6 445.2C544.2 447.7 554.9 450.1 565.6 452.4C576.3 454.7 588.3 457.4 595.7 459.0C603.1 460.6 601.9 460.5 610.0 462.3C618.1 464.1 631.3 466.8 644.6 469.9C657.9 473.0 673.2 477.3 689.6 480.7C706.0 484.1 725.1 487.2 743.3 490.4C761.4 493.5 782.4 496.7 798.5 499.6C814.6 502.5 825.0 504.8 840.0 507.6C855.0 510.5 869.7 513.0 888.5 516.7C907.3 520.4 933.6 525.9 952.6 529.6C971.6 533.3 991.4 536.8 1002.6 539.1C1013.8 541.4 1013.3 542.0 1020.0 543.5C1026.7 545.0 1033.0 546.0 1042.6 547.8C1052.2 549.6 1067.0 552.3 1077.7 554.1C1088.4 555.9 1097.2 557.2 1106.5 558.6C1115.8 560.0 1125.0 561.2 1133.4 562.2C1141.8 563.2 1149.3 563.9 1156.7 564.8C1164.1 565.7 1171.0 566.9 1177.6 567.7C1184.2 568.6 1190.2 569.1 1196.4 569.9C1202.6 570.6 1208.9 571.5 1214.7 572.2C1220.5 572.9 1226.1 573.8 1231.4 574.2C1236.7 574.6 1241.6 574.6 1246.4 574.7C1251.2 574.8 1255.8 574.7 1260.5 574.6C1265.2 574.5 1270.1 574.3 1274.6 574.2C1279.1 574.1 1283.4 574.0 1287.6 573.9C1291.8 573.8 1295.8 573.9 1299.5 573.9C1303.2 573.9 1308.2 574.1 1310.0 574.1" fill="none" stroke="#e6740e" stroke-width="2" stroke-linejoin="round"/><path d="M377.0 406.1C377.3 406.1 368.3 405.9 379.0 406.2C389.7 406.5 422.5 407.4 441.0 408.2C459.5 409.0 474.9 410.0 490.0 410.8C505.1 411.6 519.0 412.1 531.6 413.0C544.2 413.9 554.9 415.1 565.6 416.2C576.3 417.3 588.3 418.8 595.7 419.8C603.1 420.8 605.7 421.2 610.0 422.0C614.3 422.8 615.7 423.1 621.5 424.3C627.3 425.6 639.2 428.2 644.6 429.5C650.0 430.8 649.2 430.5 653.7 431.8C658.2 433.1 665.6 435.2 671.6 437.2C677.6 439.2 683.6 441.6 689.6 444.0C695.6 446.4 701.5 448.8 707.5 451.5C713.5 454.2 719.4 457.1 725.4 460.1C731.4 463.1 737.3 466.1 743.3 469.4C749.3 472.6 755.2 476.2 761.2 479.6C767.2 483.0 772.9 486.2 779.1 489.6C785.3 493.0 790.7 495.5 798.5 499.9C806.3 504.3 815.3 510.0 825.8 515.8C836.3 521.6 851.1 529.1 861.6 534.6C872.1 540.1 879.5 544.5 888.5 548.6C897.5 552.7 904.7 555.6 915.4 559.3C926.1 563.0 938.1 567.7 952.6 571.0C967.1 574.3 991.4 577.2 1002.6 579.0C1013.8 580.8 1013.3 581.2 1020.0 582.0C1026.7 582.8 1033.0 583.3 1042.6 583.8C1052.2 584.3 1067.0 584.7 1077.7 584.9C1088.4 585.1 1097.2 584.9 1106.5 584.9C1115.8 584.9 1125.0 584.8 1133.4 584.7C1141.8 584.6 1146.2 584.4 1156.7 584.4C1167.2 584.4 1186.7 584.5 1196.4 584.7C1206.1 584.9 1208.9 585.4 1214.7 585.6C1220.5 585.9 1226.1 586.3 1231.4 586.2C1236.7 586.1 1241.6 585.4 1246.4 585.0C1251.2 584.6 1255.8 584.3 1260.5 583.9C1265.2 583.5 1270.1 582.9 1274.6 582.5C1279.1 582.1 1283.4 581.8 1287.6 581.5C1291.8 581.2 1295.8 580.9 1299.5 580.7C1303.2 580.5 1308.2 580.2 1310.0 580.1" fill="none" stroke="#0a6838" stroke-width="2" stroke-linejoin="round"/><path d="M377.0 402.3C377.3 402.3 368.3 402.4 379.0 402.2C389.7 402.0 422.5 401.6 441.0 401.0C459.5 400.4 474.9 399.5 490.0 398.7C505.1 397.9 519.0 397.2 531.6 396.2C544.2 395.1 554.9 393.5 565.6 392.4C576.3 391.2 588.3 390.1 595.7 389.3C603.1 388.5 605.7 387.9 610.0 387.4C614.3 386.9 615.7 386.6 621.5 386.1C627.3 385.6 639.2 384.6 644.6 384.2C650.0 383.8 650.8 383.8 653.7 383.8C656.6 383.8 659.0 383.8 662.0 384.0C665.0 384.2 667.0 384.2 671.6 384.9C676.2 385.5 683.6 386.3 689.6 387.9C695.6 389.5 701.5 391.4 707.5 394.5C713.5 397.6 719.4 401.5 725.4 406.4C731.4 411.3 737.3 417.1 743.3 423.7C749.3 430.3 755.2 438.2 761.2 446.1C767.2 454.0 772.9 462.2 779.1 471.2C785.3 480.2 793.7 492.6 798.5 499.9C803.3 507.2 803.4 507.9 807.9 514.9C812.4 521.9 819.8 533.3 825.8 541.8C831.8 550.2 837.7 558.4 843.7 565.6C849.7 572.8 855.6 579.2 861.6 584.8C867.6 590.4 875.1 595.8 879.6 599.1C884.1 602.4 885.5 603.1 888.5 604.8C891.5 606.4 893.0 607.4 897.5 609.0C902.0 610.6 909.4 613.4 915.4 614.7C921.4 616.0 927.1 616.7 933.3 617.0C939.5 617.3 946.6 617.1 952.6 616.7C958.6 616.3 960.8 615.7 969.1 614.7C977.4 613.7 994.1 611.8 1002.6 610.8C1011.1 609.8 1013.3 609.7 1020.0 608.9C1026.7 608.1 1033.0 607.4 1042.6 606.0C1052.2 604.6 1067.0 602.3 1077.7 600.8C1088.4 599.2 1097.2 597.9 1106.5 596.7C1115.8 595.6 1125.0 594.7 1133.4 593.9C1141.8 593.1 1149.3 592.4 1156.7 591.9C1164.1 591.4 1171.0 591.3 1177.6 591.0C1184.2 590.7 1190.2 590.1 1196.4 589.9C1202.6 589.7 1208.9 589.9 1214.7 589.9C1220.5 589.9 1226.1 590.1 1231.4 589.9C1236.7 589.7 1241.6 589.3 1246.4 588.8C1251.2 588.3 1255.8 587.6 1260.5 587.0C1265.2 586.4 1270.1 585.9 1274.6 585.4C1279.1 584.9 1283.4 584.3 1287.6 583.9C1291.8 583.5 1295.8 583.1 1299.5 582.8C1303.2 582.5 1308.2 582.0 1310.0 581.9" fill="none" stroke="#4040d2" stroke-width="2" stroke-linejoin="round"/><path d="M379.5 217V808" stroke="#000" stroke-width="1.400"/><path d="M379 807.5H1310" stroke="#000" stroke-width="1.600"/></svg>
<span class="t" style="left:339.3px;top:762.8px;width:32px;text-align:right">70</span>
<span class="t" style="left:339.3px;top:685.5px;width:32px;text-align:right">75</span>
<span class="t" style="left:339.3px;top:608.2px;width:32px;text-align:right">80</span>
<span class="t" style="left:339.3px;top:531.0px;width:32px;text-align:right">85</span>
<span class="t" style="left:339.3px;top:453.8px;width:32px;text-align:right">90</span>
<span class="t" style="left:339.3px;top:376.5px;width:32px;text-align:right">95</span>
<span class="t" style="left:339.3px;top:299.2px;width:32px;text-align:right">100</span>
<span class="t" style="left:339.3px;top:222.0px;width:32px;text-align:right">105</span>
<span class="t" style="left:420.7px;top:813px;width:40px;text-align:center">40</span>
<span class="t" style="left:470.3px;top:813px;width:40px;text-align:center">50</span>
<span class="t" style="left:510.8px;top:813px;width:40px;text-align:center">60</span>
<span class="t" style="left:545.1px;top:813px;width:40px;text-align:center">70</span>
<span class="t" style="left:574.7px;top:813px;width:40px;text-align:center">80</span>
<span class="t" style="left:600.9px;top:813px;width:40px;text-align:center">90</span>
<span class="t" style="left:624.3px;top:813px;width:40px;text-align:center">100</span>
<span class="t" style="left:778.3px;top:813px;width:40px;text-align:center">200</span>
<span class="t" style="left:868.4px;top:813px;width:40px;text-align:center">300</span>
<span class="t" style="left:932.4px;top:813px;width:40px;text-align:center">400</span>
<span class="t" style="left:982.0px;top:813px;width:40px;text-align:center">500</span>
<span class="t" style="left:1022.5px;top:813px;width:40px;text-align:center">600</span>
<span class="t" style="left:1056.7px;top:813px;width:40px;text-align:center">700</span>
<span class="t" style="left:1086.4px;top:813px;width:40px;text-align:center">800</span>
<span class="t" style="left:1112.6px;top:813px;width:40px;text-align:center">900</span>
<span class="t" style="left:1136.0px;top:813px;width:40px;text-align:center">1,0k</span>
<span class="t" style="left:1176.5px;top:813px;width:40px;text-align:center;color:#9c9c9c">1,2k</span>
<span class="t" style="left:1210.7px;top:813px;width:40px;text-align:center;color:#9c9c9c">1,4k</span>
<span class="t" style="left:1253.9px;top:813px;width:40px;text-align:center;color:#9c9c9c">1,7k</span>
<span class="t" style="left:1295px;top:813px;width:36px;text-align:center">2kHz</span>
<div style="left:379.5px;top:783px;width:129px;height:22px;border:1px solid #8a8a8a;border-radius:5px;background:linear-gradient(#fdfdfd,#ededed 50%,#c8c8c8);box-shadow:0 1px 1px rgba(0,0,0,.15)"></div>
<span class="t" style="left:380px;top:789px;width:128px;text-align:center;color:#111">Average the Responses</span>
<div style="left:366px;top:811px;width:26px;height:15px;background:#fff;border:1px solid #0000ff"></div><span class="t s" style="left:366px;top:812.5px;width:26px;text-align:center;color:#0000ee">30,3</span>
<div style="left:344px;top:800px;width:32px;height:15px;background:#fff;border:1px solid #0000ff"></div><span class="t s" style="left:344px;top:801.5px;width:32px;text-align:center;color:#0000ee">67,46</span>
<div style="left:375px;top:830px;width:936px;height:16px;background:#fff;border:1px solid #9a9a9a"></div>
<div style="left:375px;top:830px;width:16px;height:16px;border:1px solid #9a9a9a;background:linear-gradient(#f6f6f6,#d8d8d8)"></div>
<div style="left:1295px;top:830px;width:16px;height:16px;border:1px solid #9a9a9a;background:linear-gradient(#f6f6f6,#d8d8d8)"></div>
<svg style="left:375px;top:830px" width="16" height="16" viewBox="0 0 16 16"><path d="M10 4v8l-4.500-4z" fill="#333"/></svg>
<svg style="left:1295px;top:830px" width="16" height="16" viewBox="0 0 16 16"><path d="M6 4v8l4.500-4z" fill="#333"/></svg>
<div style="left:629px;top:830px;width:381px;height:16px;border:1px solid #9a9a9a;background:linear-gradient(#f4f4f4,#d2d2d2)"></div>
<!-- legend (generated) -->
<div style="left:488px;top:849px;width:709px;height:43px;background:#fff;box-shadow:0 0 2px 1px rgba(0,0,0,.38),1px 1px 2px rgba(0,0,0,.3)"></div>
<svg style="left:492px;top:853px" width="14" height="14" viewBox="0 0 14 14"><defs><linearGradient id="cb492853" x1="0" y1="0" x2="0" y2="1"><stop offset="0" stop-color="#fdfdfd"/><stop offset="1" stop-color="#d6d6d6"/></linearGradient></defs><rect x=".5" y=".5" width="13" height="13" rx="2" fill="url(#cb492853)" stroke="#6a6a6a"/><path d="M3 6.200l2.900 4.600 4.900-9.600" fill="none" stroke="#0a0a0a" stroke-width="1.900"/></svg>
<span class="t s" style="left:512px;top:854px;color:#0a6838">1: Smard LSQ10</span>
<div style="left:677px;top:859px;width:49px;height:2px;background:#0a6838"></div>
<span class="t" style="left:768px;top:854px;color:#0a6838">93,4 dB</span>
<svg style="left:842px;top:853px" width="14" height="14" viewBox="0 0 14 14"><defs><linearGradient id="cb842853" x1="0" y1="0" x2="0" y2="1"><stop offset="0" stop-color="#fdfdfd"/><stop offset="1" stop-color="#d6d6d6"/></linearGradient></defs><rect x=".5" y=".5" width="13" height="13" rx="2" fill="url(#cb842853)" stroke="#6a6a6a"/><path d="M3 6.200l2.900 4.600 4.900-9.600" fill="none" stroke="#0a0a0a" stroke-width="1.900"/></svg>
<span class="t s" style="left:862px;top:854px;color:#4040d2">2: Smard LSQ25</span>
<div style="left:1027px;top:859px;width:49px;height:2px;background:#4040d2"></div>
<span class="t" style="left:1118px;top:854px;color:#4040d2">93,7 dB</span>
<svg style="left:492px;top:876px" width="14" height="14" viewBox="0 0 14 14"><defs><linearGradient id="cb492876" x1="0" y1="0" x2="0" y2="1"><stop offset="0" stop-color="#fdfdfd"/><stop offset="1" stop-color="#d6d6d6"/></linearGradient></defs><rect x=".5" y=".5" width="13" height="13" rx="2" fill="url(#cb492876)" stroke="#6a6a6a"/><path d="M3 6.200l2.900 4.600 4.900-9.600" fill="none" stroke="#0a0a0a" stroke-width="1.900"/></svg>
<span class="t s" style="left:512px;top:877px;color:#e6740e">3: Smard LSQ3</span>
<div style="left:677px;top:882px;width:49px;height:2px;background:#e6740e"></div>
<span class="t" style="left:768px;top:877px;color:#e6740e">92,6 dB</span>
<!-- status (generated) -->
<div style="left:8px;top:898px;width:1325px;height:23px;background:#dcdcdc;border-top:1px solid #9c9c9c;border-bottom:1px solid #8a8a8a"></div>
<div style="left:85px;top:898px;width:1px;height:23px;background:#9c9c9c"></div>
<div style="left:141px;top:898px;width:1px;height:23px;background:#9c9c9c"></div>
<div style="left:178px;top:898px;width:1px;height:23px;background:#9c9c9c"></div>
<div style="left:188px;top:898px;width:1px;height:23px;background:#9c9c9c"></div>
<div style="left:390px;top:898px;width:1px;height:23px;background:#9c9c9c"></div>
<div style="left:653px;top:898px;width:1px;height:23px;background:#9c9c9c"></div>
<div style="left:1127px;top:898px;width:1px;height:23px;background:#9c9c9c"></div>
<span class="t" style="left:11px;top:905px;font-size:10.7px">88/154MB</span>
<span class="t" style="left:90px;top:905px;font-size:10.7px">48000 Hz</span>
<span class="t" style="left:146px;top:905px;font-size:10.7px">16 Bit</span>
<span class="t" style="left:193px;top:905px;color:#5050e0;letter-spacing:.67px">0000 0000  0000 0000  0000 0000</span>
<span class="t" style="left:395px;top:905px;font-size:10.7px">Peak input before clipping 120 dB SPL (uncalibrated)</span>
<!-- frame -->
<div style="left:1332px;top:1px;width:1px;height:921px;background:#4c4c4c"></div>
<div style="left:8px;top:921px;width:1325px;height:1px;background:#6e6e6e"></div>
<div style="left:0;top:0;width:1340px;height:1px;background:#3c3c3c"></div>

</body></html>
